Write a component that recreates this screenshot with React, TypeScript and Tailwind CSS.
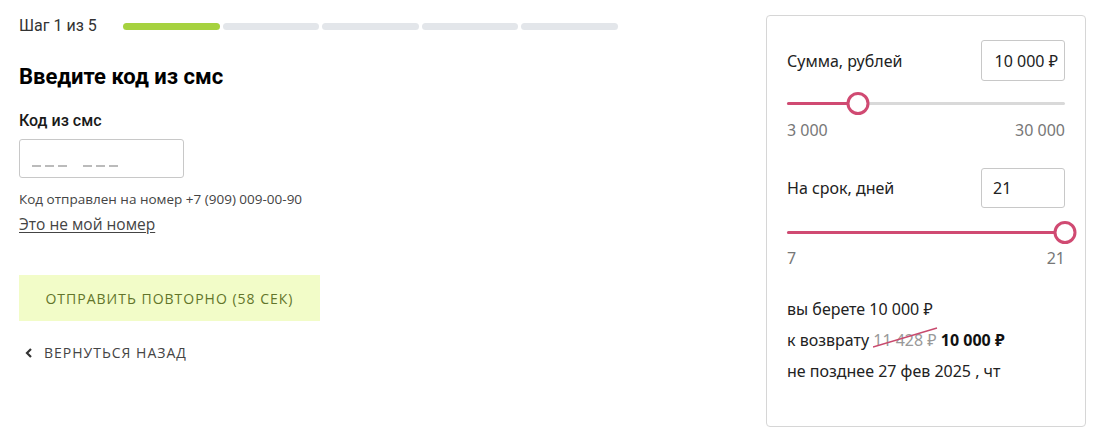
import React from "react";

function Slider({ pct }: { pct: number }) {
  return (
    <div className="relative h-[22px] flex items-center">
      <div className="h-[3px] w-full bg-[#d9d9d9] rounded-full relative">
        <div className="absolute left-0 top-0 h-[3px] bg-[#d04a72] rounded-full" style={{ width: `${pct}%` }} />
      </div>
      <div
        className="absolute top-0 w-[23px] h-[23px] rounded-full border-[3px] border-[#d04a72] bg-white -translate-x-1/2"
        style={{ left: `${pct}%` }}
      />
    </div>
  );
}

function Dashes() {
  return (
    <div className="flex items-end gap-[4px] h-[14px]">
      {[0, 1, 2].map((i) => (
        <div key={"a" + i} className="w-[9px] h-[1.5px] bg-[#bbbbbb]" />
      ))}
      <div className="w-[8px]" />
      {[0, 1, 2].map((i) => (
        <div key={"b" + i} className="w-[9px] h-[1.5px] bg-[#bbbbbb]" />
      ))}
    </div>
  );
}

export default function App() {
  return (
    <div className="w-[1109px] h-[441px] bg-white flex text-[#1a1a1a]" style={{ fontFamily: "Roboto, 'Noto Sans', sans-serif" }}>
      <div className="w-[618px] pl-[19px] pt-[16px] flex flex-col">
        <div className="flex items-center h-[20px]">
          <span className="w-[104px] text-[16px] text-[#333]">Шаг 1 из 5</span>
          <div className="flex-1 flex gap-[3px]">
            <div className="flex-1 h-[7px] rounded-full bg-[#a6d23f]" />
            <div className="flex-1 h-[7px] rounded-full bg-[#e3e6ea]" />
            <div className="flex-1 h-[7px] rounded-full bg-[#e3e6ea]" />
            <div className="flex-1 h-[7px] rounded-full bg-[#e3e6ea]" />
            <div className="flex-1 h-[7px] rounded-full bg-[#e3e6ea]" />
          </div>
        </div>
        <h1 className="mt-[28px] text-[22px] font-bold leading-[26px] text-black">Введите код из смс</h1>
        <div className="mt-[22px] text-[16px] font-medium leading-[18px]">Код из смс</div>
        <div className="mt-[9px] w-[165px] h-[39px] border border-[#c8c8c8] rounded-[3px] flex items-center pl-[12px] pt-[2px]">
          <Dashes />
        </div>
        <div className="mt-[13px] text-[13.5px] text-[#444] leading-[17px]" style={{ fontFamily: "'Open Sans', 'Noto Sans', sans-serif" }}>
          Код отправлен на номер +7 (909) 009-00-90
        </div>
        <a className="mt-[6px] text-[15.5px] text-[#444] underline underline-offset-2 leading-[20px] w-fit" style={{ fontFamily: "'Open Sans', 'Noto Sans', sans-serif" }}>
          Это не мой номер
        </a>
        <div className="mt-[41px] w-[301px] h-[46px] bg-[#f2fcc8] flex items-center justify-center text-[14px] tracking-[1px] text-[#62752a] font-medium" style={{ fontFamily: "'Open Sans', 'Noto Sans', sans-serif" }}>
          ОТПРАВИТЬ ПОВТОРНО (58 СЕК)
        </div>
        <div className="mt-[21px] flex items-center gap-[10px] text-[14px] tracking-[1px] text-[#444] pl-[5px]" style={{ fontFamily: "'Open Sans', 'Noto Sans', sans-serif" }}>
          <svg width="10" height="12" viewBox="0 0 10 12" fill="none">
            <path d="M7 2L3 6l4 4" stroke="#333" strokeWidth="2.2" />
          </svg>
          <span>ВЕРНУТЬСЯ НАЗАД</span>
        </div>
      </div>
      <div className="ml-[148px] mt-[15px] w-[320px] h-[412px] border border-[#d6d6d6] rounded-[4px] px-[20px] pt-[24px] flex flex-col text-[16px]" style={{ fontFamily: "'Noto Sans', sans-serif" }}>
        <div className="flex items-center justify-between">
          <span className="text-[#222]">Сумма, рублей</span>
          <div className="w-[84px] h-[41px] border border-[#c8c8c8] rounded-[3px] flex items-center justify-end pr-[6px] text-[#222]">10 000 ₽</div>
        </div>
        <div className="mt-[11px]">
          <Slider pct={25.6} />
        </div>
        <div className="mt-[6px] flex justify-between text-[#777] leading-[20px]">
          <span>3 000</span>
          <span>30 000</span>
        </div>
        <div className="mt-[28px] flex items-center justify-between">
          <span className="text-[#222]">На срок, дней</span>
          <div className="w-[84px] h-[40px] border border-[#c8c8c8] rounded-[3px] flex items-center pl-[11px] text-[#222]">21</div>
        </div>
        <div className="mt-[13px]">
          <Slider pct={100} />
        </div>
        <div className="mt-[5px] flex justify-between text-[#777] leading-[20px]">
          <span>7</span>
          <span>21</span>
        </div>
        <div className="mt-[26px] flex flex-col leading-[31px] text-[#222]">
          <span>вы берете 10 000 ₽</span>
          <span className="flex items-center">
            к возврату&nbsp;
            <span className="relative text-[#999]">
              11 428 ₽
              <svg className="absolute left-0 top-0" width="66" height="31" viewBox="0 0 66 31">
                <path d="M0 22 L64 3" stroke="#c84a6e" strokeWidth="1.5" />
              </svg>
            </span>
            &nbsp;<b className="font-bold text-[#111]">10 000 ₽</b>
          </span>
          <span>не позднее 27 фев 2025 , чт</span>
        </div>
      </div>
    </div>
  );
}
